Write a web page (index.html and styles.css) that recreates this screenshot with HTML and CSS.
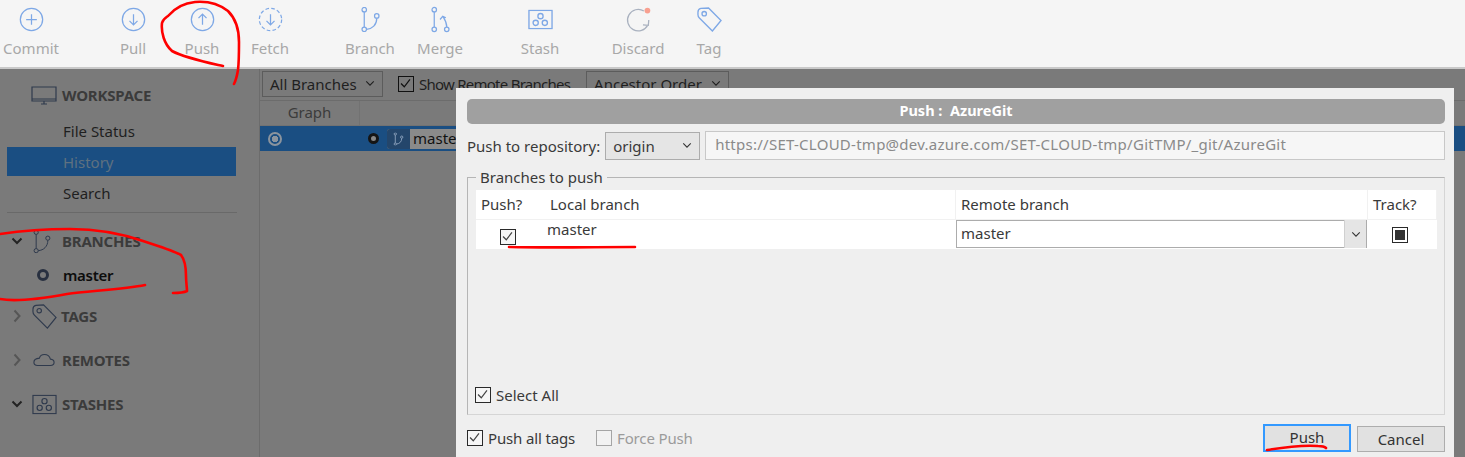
FILE: index.html
```html
<!DOCTYPE html>
<html lang="en">
<head>
<meta charset="utf-8">
<title>Push : AzureGit</title>
<link rel="stylesheet" href="styles.css">
</head>
<body>
<svg class="sprite" width="0" height="0" aria-hidden="true">
  <symbol id="i-branch" viewBox="0 0 24 28">
    <circle cx="5" cy="3" r="2.5"/><circle cx="5" cy="25" r="2.5"/><circle cx="19" cy="10" r="2.5"/>
    <path d="M5 5.5V22.5M7.5 25C14 24.500 19 20 19 12.500"/>
  </symbol>
  <symbol id="i-tag" viewBox="0 0 26 26">
    <path d="M1 5.500Q1 2 4 1.500L12 1 25 14 16 25 2.500 11.500Q1 10 1 8Z"/><circle cx="7.500" cy="7" r="2.300"/>
  </symbol>
  <symbol id="i-stash" viewBox="0 0 26 21">
    <rect x="1" y="1" width="24" height="19"/><circle cx="13" cy="7" r="2.700"/><circle cx="8" cy="14" r="2.700"/><circle cx="17.500" cy="14" r="2.700"/>
  </symbol>
</svg>

<header class="toolbar">
  <div class="tool tool-first">
    <svg class="tool-icon" viewBox="0 0 28 28"><circle cx="14" cy="14" r="12.500"/><path d="M14 8V20M8 14H20"/></svg>
    <span>Commit</span>
  </div>
  <div class="tool tool-pull">
    <svg class="tool-icon" viewBox="0 0 28 28"><circle cx="14" cy="14" r="12.500"/><path d="M14 8V20M9.500 15.500 14 20 18.500 15.500"/></svg>
    <span>Pull</span>
  </div>
  <div class="tool tool-push">
    <svg class="tool-icon" viewBox="0 0 28 28"><circle cx="14" cy="14" r="12.500"/><path d="M14 20V8M9.500 12.500 14 8 18.500 12.500"/></svg>
    <span>Push</span>
  </div>
  <div class="tool">
    <svg class="tool-icon" viewBox="0 0 28 28"><circle class="dashed" cx="14" cy="14" r="12.500"/><path d="M14 8V20M9.500 15.500 14 20 18.500 15.500"/></svg>
    <span>Fetch</span>
  </div>
  <div class="tool tool-branch">
    <svg class="tool-icon" viewBox="0 0 24 28"><use href="#i-branch"/></svg>
    <span>Branch</span>
  </div>
  <div class="tool tool-merge">
    <svg class="tool-icon" viewBox="0 0 24 28"><circle cx="5" cy="3" r="2.500"/><circle cx="5" cy="25" r="2.500"/><circle cx="19" cy="25" r="2.500"/><path d="M5 5.500V22.500M19 22.500C19 17 17 14 15 11M11.500 14 14.500 10.500 18 12"/></svg>
    <span>Merge</span>
  </div>
  <div class="tool tool-stash">
    <svg class="tool-icon" viewBox="0 0 26 21"><use href="#i-stash"/></svg>
    <span>Stash</span>
  </div>
  <div class="tool tool-discard">
    <svg class="tool-icon icon-grey" viewBox="0 0 28 28"><path d="M20 4.500A12 12 0 1 0 24.500 20M25.500 14.500 25 20.500 19 20"/><circle class="dot" cx="24" cy="4" r="3.200"/></svg>
    <span>Discard</span>
  </div>
  <div class="tool tool-tag">
    <svg class="tool-icon" viewBox="0 0 26 26"><use href="#i-tag"/></svg>
    <span>Tag</span>
  </div>
</header>

<div class="body">
  <aside class="sidebar">
    <div class="section section-workspace">
      <svg class="sec-icon" viewBox="0 0 26 19"><path d="M1 1H25V15H1ZM1 13H25M10 18H16M13 15V18"/></svg>
      <span>WORKSPACE</span>
    </div>
    <nav class="nav">
      <div class="nav-item">File Status</div>
      <div class="nav-item nav-active">History</div>
      <div class="nav-item">Search</div>
    </nav>
    <div class="divider"></div>
    <div class="section section-branches">
      <svg class="chev" viewBox="0 0 12 8"><path d="M1.500 1.500 6 6 10.500 1.500"/></svg>
      <svg class="sec-icon sec-branch" viewBox="0 0 24 28"><use href="#i-branch"/></svg>
      <span>BRANCHES</span>
    </div>
    <div class="branch-row"><i class="branch-dot"></i><b>master</b></div>
    <div class="section section-tags">
      <svg class="chev chev-closed" viewBox="0 0 12 8"><path d="M3.500 -1.500 8.500 4 3.500 9.500"/></svg>
      <svg class="sec-icon sec-tag" viewBox="0 0 26 26"><use href="#i-tag"/></svg>
      <span>TAGS</span>
    </div>
    <div class="section section-remotes">
      <svg class="chev chev-closed" viewBox="0 0 12 8"><path d="M3.500 -1.500 8.500 4 3.500 9.500"/></svg>
      <svg class="sec-icon sec-cloud" viewBox="0 0 24 14"><path d="M5 13H19Q23 13 23 9.500 23 6.500 19 6 17.500 1 12.500 1 8 1 7 5 1 5.500 1 9.500 1 13 5 13Z"/></svg>
      <span>REMOTES</span>
    </div>
    <div class="section section-stashes">
      <svg class="chev" viewBox="0 0 12 8"><path d="M1.500 1.500 6 6 10.500 1.500"/></svg>
      <svg class="sec-icon sec-stash" viewBox="0 0 26 21"><use href="#i-stash"/></svg>
      <span>STASHES</span>
    </div>
  </aside>

  <main class="history">
    <div class="filters">
      <div class="dark-select select-branches"><span>All Branches</span><svg class="caret" viewBox="0 0 12 8"><path d="M1.500 1.500 6 6 10.500 1.500"/></svg></div>
      <label class="dark-check"><i class="box box-dark"><svg viewBox="0 0 16 16"><path d="M2.500 8 6.500 12 13.500 3"/></svg></i><span>Show Remote Branches</span></label>
      <div class="dark-select select-order"><span>Ancestor Order</span><svg class="caret" viewBox="0 0 12 8"><path d="M1.500 1.500 6 6 10.500 1.500"/></svg></div>
    </div>
    <div class="col-head"><div class="col-graph">Graph</div></div>
    <div class="commit-row">
      <i class="graph-node"></i>
      <i class="head-dot"></i>
      <span class="chip"><span class="chip-icon"><svg viewBox="0 0 24 28"><use href="#i-branch"/></svg></span><span class="chip-label">master</span></span>
    </div>
  </main>
</div>

<section class="modal">
  <div class="modal-title">Push :&nbsp; AzureGit</div>
  <div class="repo-row">
    <span>Push to repository:</span>
    <div class="light-select"><span>origin</span><svg class="caret" viewBox="0 0 12 8"><path d="M1.500 1.500 6 6 10.500 1.500"/></svg></div>
    <div class="url">https://SET-CLOUD-tmp@dev.azure.com/SET-CLOUD-tmp/GitTMP/_git/AzureGit</div>
  </div>
  <fieldset class="branches">
    <legend>Branches to push</legend>
    <div class="table">
      <div class="cell th c-push">Push?</div>
      <div class="cell th c-local">Local branch</div>
      <div class="cell th c-remote">Remote branch</div>
      <div class="cell th c-track">Track?</div>
      <div class="cell td-check"><i class="box"><svg viewBox="0 0 16 16"><path d="M2.500 8 6.500 12 13.500 3"/></svg></i></div>
      <div class="cell td-local">master</div>
      <div class="cell td-remote"><div class="combo"><span>master</span><div class="combo-btn"><svg class="caret" viewBox="0 0 12 8"><path d="M1.500 1.500 6 6 10.500 1.500"/></svg></div></div></div>
      <div class="cell td-track"><i class="box box-mixed"><i></i></i></div>
    </div>
    <label class="check select-all"><i class="box"><svg viewBox="0 0 16 16"><path d="M2.500 8 6.500 12 13.500 3"/></svg></i><span>Select All</span></label>
  </fieldset>
  <div class="modal-foot">
    <label class="check"><i class="box"><svg viewBox="0 0 16 16"><path d="M2.500 8 6.500 12 13.500 3"/></svg></i><span>Push all tags</span></label>
    <label class="check check-off"><i class="box"></i><span>Force Push</span></label>
    <button class="btn btn-default" type="button">Push</button>
    <button class="btn btn-cancel" type="button">Cancel</button>
  </div>
</section>

<svg class="ink" viewBox="0 0 1465 457" width="1465" height="457" aria-hidden="true">
  <path d="M223 66C205 62 185 58 172 51 164 44 161 32 162 23 163 19 165 18 168 16 174 9 184 3 195 2 207 1 219 4 228 11 236 19 239 30 239 42 239 52 239 62 238 70 237 76 236 80 234 84"/>
  <path d="M0 234C20 231 45 229 70 229 95 229 120 233 143 241 158 246 172 250 181 255 185 260 186 268 186 276 186 282 187 288 187 291 183 293 178 293 173 293"/>
  <path d="M0 299C15 302 40 299 67 294 90 291 125 289 145 285"/>
  <path d="M509 247C550 248 595 247 635 247"/>
  <path d="M1267 450C1285 447 1305 445 1318 446 1322 446 1325 447 1326 448"/>
</svg>
</body>
</html>
```
FILE: styles.css
```css
* { box-sizing: border-box; }
html, body { margin: 0; height: 457px; overflow: hidden; }
body {
  position: relative;
  width: 1465px;
  font-family: "Noto Sans", "Open Sans", sans-serif;
  font-size: 15px;
  color: #333;
  background: #7a7a7a;
}
.sprite { position: absolute; }
symbol { fill: none; }
i { display: block; font-style: normal; }

/* toolbar */
.toolbar {
  display: flex;
  height: 69px;
  background: #f5f5f5;
  border-bottom: 2px solid #c9c9c9;
}
.tool {
  width: 68px;
  display: flex;
  flex-direction: column;
  align-items: center;
  color: #a8a8a8;
  padding-top: 7px;
  line-height: 20px;
}
.tool span { margin-top: 6px; }
.tool-first { width: 62px; }
.tool-pull { margin-left: 37px; }
.tool-push { margin-left: 1px; }
.tool-branch { margin-left: 32px; }
.tool-merge { margin-left: 2px; }
.tool-stash { margin-left: 32px; }
.tool-discard { margin-left: 30px; }
.tool-tag { margin-left: 3px; }
.tool-icon {
  height: 25px;
  width: 25px;
  fill: none;
  stroke: #7ea8e6;
  stroke-width: 1.400;
  overflow: visible;
}
.dashed { stroke-dasharray: 4 2.600; }
.icon-grey { stroke: #a9b1bf; }
.dot { fill: #f8a090; stroke: none; }

/* body */
.body { display: flex; height: 388px; }
.sidebar {
  width: 260px;
  flex: none;
  border-right: 1px solid #6c6c6c;
  padding: 12px 0 0 0;
  color: #1f1f1f;
}
.section {
  display: flex;
  align-items: center;
  height: 28px;
  font-weight: 700;
  color: #3b3b3b;
  white-space: nowrap;
}
.section > span { letter-spacing: -0.200px; }
.section-workspace { padding-left: 31px; }
.sec-icon {
  width: 26px;
  height: 19px;
  margin-right: 5px;
  fill: none;
  stroke: #2f3a4d;
  stroke-width: 1.200;
  flex: none;
  overflow: visible;
}
.nav { margin-top: 7px; display: flex; flex-direction: column; gap: 2px; }
.nav-item { height: 29px; margin: 0 23px 0 7px; padding-left: 56px; line-height: 30px; }
.nav-active { background: #1a4e82; color: #5f7180; }
.divider { height: 1px; margin: 5px 22px 0 7px; background: #696969; }
.section-branches { margin-top: 14px; padding-left: 11px; }
.chev {
  width: 12px;
  height: 8px;
  margin-right: 9px;
  fill: none;
  stroke: #232323;
  stroke-width: 2;
  flex: none;
  overflow: visible;
}
.chev-closed { stroke: #565656; }
.sec-branch { width: 20px; height: 25px; margin-right: 10px; }
.branch-row { display: flex; align-items: center; height: 28px; margin-top: 6px; padding-left: 37px; color: #0d0d0d; }
.branch-row b { font-weight: 600; margin-left: 14px; letter-spacing: -0.300px; }
.branch-dot { width: 12px; height: 12px; border: 3px solid #283040; border-radius: 50%; }
.section-tags { margin-top: 13px; padding-left: 11px; }
.sec-tag { width: 25px; height: 25px; margin-right: 4px; }
.section-remotes { margin-top: 16px; padding-left: 11px; }
.sec-cloud { width: 22px; height: 14px; margin-right: 7px; margin-left: 1px; }
.section-stashes { margin-top: 16px; padding-left: 11px; }
.sec-stash { width: 25px; height: 21px; margin-right: 5px; }

/* history */
.history { flex: 1; min-width: 0; }
.filters { display: flex; align-items: center; height: 32px; padding: 0 0 2px 2px; border-bottom: 1px solid #6c6c6c; color: #1f1f1f; }
.dark-select {
  display: flex;
  align-items: center;
  justify-content: space-between;
  height: 26px;
  padding: 0 7px;
  border: 1px solid #5c5c5c;
}
.select-branches { width: 121px; }
.select-order { width: 143px; margin-left: 16px; }
.caret { width: 10px; height: 7px; fill: none; stroke: #333; stroke-width: 1.300; flex: none; }
.dark-select .caret { stroke: #1f1f1f; }
.dark-check, .check { display: flex; align-items: center; gap: 5px; }
.dark-check { margin-left: 15px; white-space: nowrap; }
.dark-check span { letter-spacing: -0.750px; }
.box { position: relative; width: 16px; height: 16px; flex: none; border: 1.500px solid #2a2a2a; background: #f6f6f6; }
.box svg { display: block; width: 13px; height: 13px; fill: none; stroke: #444; stroke-width: 1.500; }
.box-dark { background: none; border-color: #111; }
.box-dark svg { stroke: #111; }
.col-head { height: 25px; border-bottom: 1px solid #727272; color: #3c3c3c; }
.col-graph { width: 100px; height: 24px; line-height: 23px; text-align: center; border-right: 1px solid #727272; }
.commit-row { display: flex; align-items: center; height: 25px; background: #1a4e82; }
.graph-node { width: 14px; height: 14px; margin-left: 8px; border: 2px solid #8b949e; border-radius: 50%; background: radial-gradient(circle, #8b949e 0 3px, transparent 3.500px); }
.head-dot { width: 11px; height: 11px; margin-left: 86px; border: 3px solid #151515; border-radius: 50%; background: #888; }
.chip { display: flex; align-items: stretch; height: 20px; margin-left: 8px; border-radius: 3px; overflow: hidden; background: #8a8a8a; color: #111; }
.chip-icon { display: flex; align-items: center; justify-content: center; width: 23px; background: #24466b; }
.chip-icon svg { width: 11px; height: 14px; fill: none; stroke: #8da3bd; stroke-width: 2; }
.chip-label { line-height: 19px; padding: 0 20px 0 3px; }

/* dialog */
.modal {
  position: absolute;
  left: 456px;
  top: 88px;
  width: 998px;
  height: 369px;
  padding: 11px 9px 0 11px;
  background: #efefef;
  color: #3a3a3a;
}
.modal-title {
  height: 25px;
  line-height: 23px;
  text-align: center;
  font-weight: 700;
  font-size: 14.500px;
  color: #fff;
  background: #a0a0a0;
  border-radius: 5px;
}
.repo-row { display: flex; align-items: center; margin-top: 7px; white-space: nowrap; }
.light-select {
  display: flex;
  align-items: center;
  justify-content: space-between;
  width: 95px;
  height: 28px;
  margin-left: 5px;
  padding: 0 7px;
  background: #e5e5e5;
  border: 1px solid #acacac;
}
.url {
  flex: 1;
  height: 29px;
  margin-left: 5px;
  padding-left: 9px;
  line-height: 25px;
  letter-spacing: 0.260px;
  background: #f6f6f6;
  border: 1px solid #c8c8c8;
  color: #8a8a8a;
}
.branches {
  display: flex;
  flex-direction: column;
  height: 248px;
  margin: 7px 0 0;
  padding: 3px 7px 0 8px;
  border: 1px solid #b5b5b5;
  min-width: 0;
}
.branches { border-right-color: #d5d5d5; border-bottom-color: #d5d5d5; }
.branches legend { margin-left: 0; padding: 0 4px; line-height: 20px; }
.table {
  display: grid;
  grid-template-columns: 69px 411px 412px 69px;
  grid-template-rows: 30px 29px;
  background: #fff;
}
.cell { display: flex; align-items: center; min-width: 0; }
.th { padding: 0 0 2px 5px; border-bottom: 1px solid #f1f1f1; border-right: 1px solid #f1f1f1; }
.c-push { border-right: 0; }
.td-check { justify-content: flex-start; padding: 5px 0 0 24px; }
.td-local { padding: 0 0 11px 2px; }
.td-remote { padding: 0 1px 1px 0; }
.combo { display: flex; align-items: center; width: 100%; height: 28px; border: 1px solid #acacac; padding: 0 0 2px 4px; }
.combo span { flex: 1; }
.combo-btn { display: flex; align-items: center; justify-content: center; width: 22px; height: 28px; margin-bottom: -2px; background: #e5e5e5; border-left: 1px solid #d0d0d0; }
.td-track { justify-content: center; padding-right: 5px; }
.box-mixed { background: #fff; display: flex; align-items: center; justify-content: center; }
.box-mixed i { width: 10px; height: 10px; background: #333; }
.select-all { margin: auto 0 0 -1px; padding-bottom: 9px; }
.modal-foot { display: flex; align-items: flex-start; margin-top: 9px; position: relative; }
.modal-foot .check { padding-top: 4px; }
.modal-foot .check span { letter-spacing: -0.150px; }
.check-off { margin-left: 21px; color: #9b9b9b; }
.check-off .box { border-color: #a5a5a5; background: #f2f2f2; }
.btn {
  font: inherit;
  color: #333;
  width: 88px;
  background: #e1e1e1;
  padding: 0 0 2px;
}
.btn-default { height: 28px; margin-left: auto; border: 2px solid #3399ff; }
.btn-cancel { height: 26px; margin: 2px 0 0 6px; border: 1px solid #adadad; padding: 0; }

/* red pen annotations */
.ink {
  position: absolute;
  left: 0;
  top: 0;
  fill: none;
  stroke: #f00;
  stroke-width: 2.600;
  stroke-linecap: round;
  stroke-linejoin: round;
  pointer-events: none;
}
```
